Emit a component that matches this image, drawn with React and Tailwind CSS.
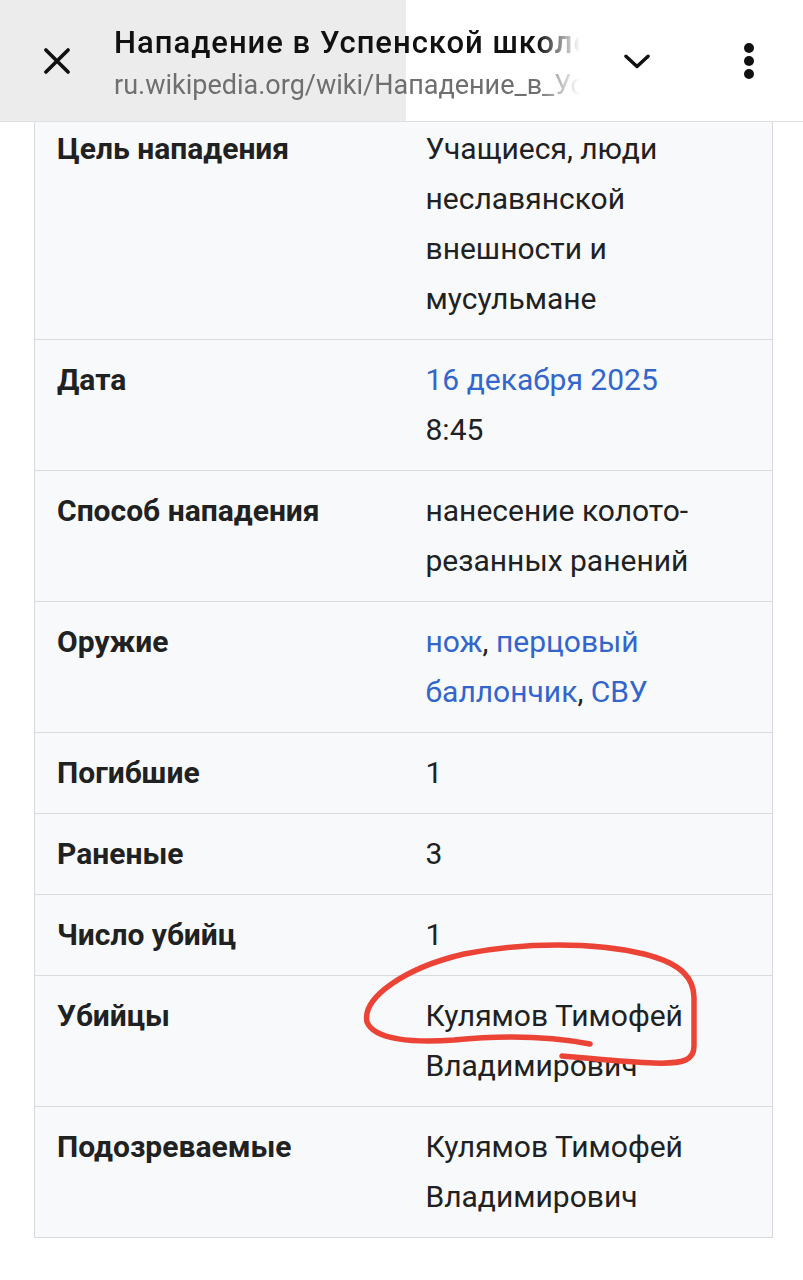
import React from "react";

const rows = [
  { label: "Цель нападения", value: <>Учащиеся, люди неславянской внешности и мусульмане</> },
  {
    label: "Дата",
    value: (
      <>
        <a className="text-[#3366cc]">16 декабря 2025</a>
        <br />
        8:45
      </>
    ),
  },
  { label: "Способ нападения", value: <>нанесение колото-<br />резанных ранений</> },
  {
    label: "Оружие",
    value: (
      <>
        <a className="text-[#3366cc]">нож</a>, <a className="text-[#3366cc]">перцовый баллончик</a>,{" "}
        <a className="text-[#3366cc]">СВУ</a>
      </>
    ),
  },
  { label: "Погибшие", value: "1" },
  { label: "Раненые", value: "3" },
  { label: "Число убийц", value: "1" },
  { label: "Убийцы", value: <>Кулямов Тимофей Владимирович</>, marked: true },
  { label: "Подозреваемые", value: <>Кулямов Тимофей Владимирович</> },
];

function Header() {
  return (
    <div className="relative z-10 h-[122px] flex items-center bg-white border-b border-[#e0e0e0] font-['Roboto',sans-serif]">
      {/* grey tab behind the left part */}
      <div className="absolute left-0 top-0 bottom-0 w-[406px] bg-[#ececec]" />
      <button className="relative w-[114px] h-full flex items-center justify-center">
        <svg width="38" height="38" viewBox="0 0 24 24">
          <path d="M5 5 L19 19 M19 5 L5 19" stroke="#111" strokeWidth="2.3" strokeLinecap="round" />
        </svg>
      </button>
      <div
        className="relative w-[466px] overflow-hidden whitespace-nowrap pt-[6px]"
        style={{ WebkitMaskImage: "linear-gradient(to right, #000 91%, transparent)" }}
      >
        <div className="text-[31px] leading-[42px] font-medium text-[#111] tracking-[1px]">
          Нападение в Успенской школе
        </div>
        <div className="text-[27px] leading-[42px] text-[#6f6f6f]">ru.wikipedia.org/wiki/Нападение_в_Успенской_школе</div>
      </div>
      <div className="relative flex-1 flex items-center">
        <div className="w-[114px] flex justify-center">
          <svg width="38" height="38" viewBox="0 0 24 24">
            <path d="M5 9 L12 15.5 L19 9" fill="none" stroke="#111" strokeWidth="2.2" strokeLinecap="round" strokeLinejoin="round" />
          </svg>
        </div>
        <div className="flex-1 flex justify-center">
          <svg width="14" height="36" viewBox="0 0 14 36">
            <circle cx="7" cy="5" r="5" fill="#111" />
            <circle cx="7" cy="18" r="5" fill="#111" />
            <circle cx="7" cy="31" r="5" fill="#111" />
          </svg>
        </div>
      </div>
    </div>
  );
}

export default function App() {
  return (
    <div className="w-[803px] h-[1280px] bg-white overflow-hidden font-['Roboto',sans-serif] text-[#202122]">
      <Header />
      <div className="-mt-[14px] pl-[34px] pr-[30px]">
        <table className="w-[739px] table-fixed border-collapse bg-[#f8f9fa] border border-[#d8dadd] text-[30px] leading-[50px]">
          <colgroup>
            <col className="w-[369px]" />
            <col />
          </colgroup>
          <tbody>
            {rows.map((r) => (
              <tr key={r.label} className="border-b border-[#d8dadd] align-top">
                <th className="text-left font-bold pl-[22px] pr-[10px] py-[15px]">{r.label}</th>
                <td className="relative pl-[22px] pr-[20px] py-[15px]">
                  {r.value}
                  {r.marked && (
                    <svg
                      className="absolute -left-[60px] -top-[40px] pointer-events-none"
                      width="380"
                      height="150"
                      viewBox="0 0 380 150"
                    >
                      <path
                        d="M246 108 C200 99 150 100 110 104 C70 107 30 104 23 86 C18 62 60 32 120 18 C180 6 250 6 300 18 C340 28 350 44 350 62 L350 110 C350 124 340 128 310 127 C280 126 245 122 218 120"
                        fill="none"
                        stroke="#ec4337"
                        strokeWidth="5.5"
                        strokeLinecap="round"
                        strokeLinejoin="round"
                      />
                    </svg>
                  )}
                </td>
              </tr>
            ))}
          </tbody>
        </table>
      </div>
    </div>
  );
}
